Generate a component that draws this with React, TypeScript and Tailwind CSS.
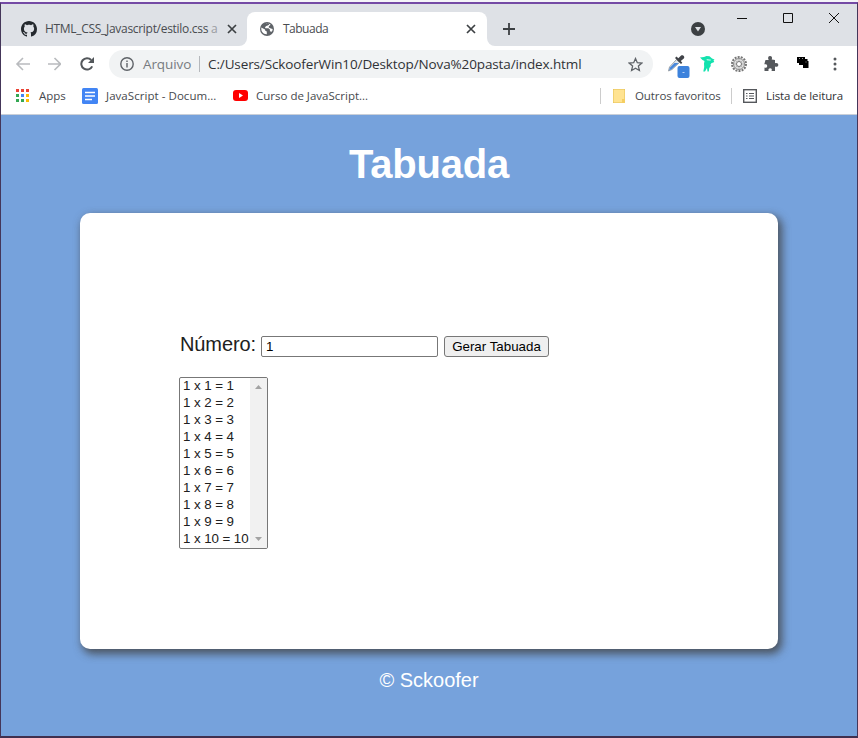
import React from "react";

const ui = "font-['Open_Sans','Noto_Sans',sans-serif] whitespace-nowrap";

function Close({ className = "" }: { className?: string }) {
  return (
    <svg className={`h-[10px] w-[10px] shrink-0 ${className}`} viewBox="0 0 10 10" stroke="#3c4043" strokeWidth="1.7">
      <path d="M1 1l8 8M9 1l-8 8" />
    </svg>
  );
}

function Github() {
  return (
    <svg className="h-4 w-4 shrink-0" viewBox="0 0 16 16" fill="#24292e">
      <path d="M8 0C3.58 0 0 3.58 0 8c0 3.54 2.29 6.53 5.47 7.59.4.07.55-.17.55-.38 0-.19-.01-.82-.01-1.49-2.01.37-2.53-.49-2.69-.94-.09-.23-.48-.94-.82-1.13-.28-.15-.68-.52-.01-.53.63-.01 1.08.58 1.23.82.72 1.21 1.87.87 2.33.66.07-.52.28-.87.51-1.07-1.78-.2-3.64-.89-3.64-3.95 0-.87.31-1.59.82-2.15-.08-.2-.36-1.02.08-2.12 0 0 .67-.21 2.2.82.64-.18 1.32-.27 2-.27s1.36.09 2 .27c1.53-1.04 2.2-.82 2.2-.82.44 1.1.16 1.92.08 2.12.51.56.82 1.27.82 2.15 0 3.07-1.87 3.75-3.65 3.95.29.25.54.73.54 1.48 0 1.07-.01 1.93-.01 2.2 0 .21.15.46.55.38A8.01 8.01 0 0 0 16 8c0-4.42-3.58-8-8-8z" />
    </svg>
  );
}

function Globe() {
  return (
    <svg className="h-[14px] w-[14px] shrink-0" viewBox="0 0 14 14">
      <circle cx="7" cy="7" r="7" fill="#5f6368" />
      <path d="M1.300 5.500 5 7.500l.3 1.300 1.500.7v2.700C3.500 12.500 1.300 9.800 1.300 7zM6 1.400l3 .2v1.200L7.700 3.600l-1.500.3L5 5.200l.5 1h3l1.400 1.400v1.600l1.800.6c.6-.9 1-1.700 1-2.800l-1.900-.6-2-.8V4.200l1.900-1.400C9.300 1.900 7.800 1 6 1.400z" fill="#fff" />
    </svg>
  );
}

function TabStrip() {
  return (
    <div className="flex h-[42px] bg-[#dee1e6]">
      <div className="flex h-[42px] w-[238px] items-center pt-2 pl-5">
        <Github />
        <div className={`ml-2 w-[176px] text-[12px] tracking-[-0.3px] text-[#494c50] ${ui}`}>
          HTML_CSS_Javascript/estilo.css <span className="text-[#9a9da2]">a</span>
        </div>
        <Close className="ml-[6px]" />
      </div>
      <div className="flex w-2 items-end bg-white"><div className="h-full w-full rounded-br-lg bg-[#dee1e6]" /></div>
      <div className="mt-2 flex w-[240px] items-center rounded-t-lg bg-white pl-[13px]">
        <Globe />
        <div className={`ml-[9px] flex-1 text-[12px] tracking-[-0.5px] text-[#494c50] ${ui}`}>Tabuada</div>
        <Close className="mr-[11px]" />
      </div>
      <div className="w-2 bg-white"><div className="h-full w-full rounded-bl-lg bg-[#dee1e6]" /></div>
      <svg className="mt-[19px] ml-[8px] h-3 w-3" viewBox="0 0 12 12" stroke="#3c4043" strokeWidth="1.8"><path d="M6 0v12M0 6h12" /></svg>
      <div className="flex-1" />
      <svg className="mt-[18px] h-[14px] w-[14px]" viewBox="0 0 14 14"><circle cx="7" cy="7" r="7" fill="#3c4043" /><path d="M4 5h6l-3 4.4z" fill="#dee1e6" /></svg>
      <svg className="mt-[9px] mr-[18px] ml-[32px] h-[11px] w-[102px]" viewBox="0 0 102 11" fill="none" stroke="#111"><path d="M0 5.500h10M46.500 .5h9v9h-9zM92 0l10 10M102 0L92 10" /></svg>
    </div>
  );
}

function Toolbar() {
  return (
    <div className="flex h-9 items-center bg-white pl-[14px]">
      <svg className="h-[14px] w-[46px] shrink-0" viewBox="0 0 46 14" fill="none" stroke="#b9bbbe" strokeWidth="1.6"><path d="M15 7H2.500M8 1 2 7l6 6M33 7h12.500M39.500 1l6 6-6 6" /></svg>
      <svg className="ml-[19px] h-[14px] w-[14px] shrink-0" viewBox="0 0 14 14"><path d="M12.200 9.300A5.700 5.700 0 1 1 11.200 3" fill="none" stroke="#53575b" strokeWidth="2" /><path d="M14 0v6H8z" fill="#53575b" /></svg>
      <div className="ml-[15px] flex h-7 w-[544px] shrink-0 items-center rounded-full bg-[#f1f3f4] pl-[11px]">
        <svg className="h-[14px] w-[14px] shrink-0" viewBox="0 0 14 14" fill="none" stroke="#5f6368" strokeWidth="1.4"><circle cx="7" cy="7" r="6.200" /><path d="M7 6v4.500M7 3.500v1.500" /></svg>
        <div className={`ml-[9px] w-[49px] text-[13.500px] tracking-[-0.1px] text-[#777b80] ${ui}`}>Arquivo</div>
        <div className="ml-[7px] mr-[8px] h-4 w-px bg-[#b5b8bc]" />
        <div className={`flex-1 text-[13.500px] tracking-[-0.12px] text-[#303236] ${ui}`}>C:/Users/SckooferWin10/Desktop/Nova%20pasta/index.html</div>
        <svg className="mr-[10px] h-[15px] w-[15px] shrink-0" viewBox="0 0 15 15" fill="none" stroke="#5f6368" strokeWidth="1.300"><path d="m7.500 1.500 1.800 4.200 4.500.4-3.400 3 1 4.400-3.900-2.300-3.900 2.300 1-4.400-3.400-3 4.500-.4z" /></svg>
      </div>
      <svg className="ml-[14px] h-[28px] w-[24px] shrink-0" viewBox="0 0 24 28">
        <path d="m1.500 21 1-4 7-7.500 3 3-7.500 7z" fill="#dfe5eb" stroke="#8b9096" strokeWidth=".8" />
        <path d="m2 20.500 1-3 4.500-4.500h4l-6.500 6z" fill="#4687dc" />
        <path d="m8 8 6 6 1.300-1.300-1.500-1.700 3-2.500c1.500-1.800-.8-4.200-2.700-3l-2.800 2.700-1.800-1.700z" fill="#414449" />
        <rect x="10.500" y="16" width="12" height="12" rx="2" fill="#3c82dc" /><path d="M15.500 22.500h2" stroke="#d8e7ff" strokeWidth=".8" />
      </svg>
      <svg className="ml-[9px] h-4 w-4 shrink-0" viewBox="0 0 16 16" fill="#12e2ae"><path fillRule="evenodd" d="M0 1.500 4 1l2.500-1 3 .3L12 2.500l2.500 1-1 1 .8 1.500-3 1.200-.8 1.300.3 1.500-1.500 2-.5 3.500H7.500L7 12 5 15.500H3.300l.9-4.500-.2-3.500L4.500 5 2.500 4z M6.500 3.200l.5 1 3.500.3.5-.8z" /></svg>
      <svg className="ml-[15px] h-4 w-4 shrink-0" viewBox="0 0 16 16" fill="none">
        <circle cx="8" cy="8" r="7" stroke="#777" strokeWidth="2" strokeDasharray="2 1.140" />
        <circle cx="8" cy="8" r="5.500" fill="#dedede" stroke="#8a8a8a" />
        <path d="M8 3v10M3 8h10M4.500 4.500l7 7M11.500 4.500l-7 7" stroke="#aaa" strokeWidth=".7" />
        <circle cx="8" cy="8" r="2.500" fill="#fff" stroke="#777" />
      </svg>
      <svg className="ml-[16px] h-4 w-4 shrink-0" viewBox="0 0 16 16" fill="#55585c"><path d="M2.500 4h3.200C4.500 1.800 5.200 0 7 0s2.600 1.700 1.700 3.500L12 4v3.300c2-.6 3.300.2 3.300 1.700s-1.500 2.300-3.300 1.500V15H8.500c.7-1.700.2-2.800-1.300-2.800S5 13.400 5.600 15H1.500v-3.500c1.600.5 2.700-.1 2.700-1.600S3 7.800 1.300 8.300z" /></svg>
      <svg className="ml-[18px] mb-[3px] h-3 w-3 shrink-0" viewBox="0 0 12 12"><path d="M0 0h8v2h2.500v2h1v7H6V8H2V6H0z" fill="#000" /><path d="M2 1.500h1M5 1.500h1M9 4.500v1" stroke="#bbb" strokeWidth=".8" /></svg>
      <svg className="ml-[24px] h-[14px] w-1 shrink-0" viewBox="0 0 4 14" fill="#55585c"><circle cx="2" cy="2" r="1.500" /><circle cx="2" cy="7" r="1.500" /><circle cx="2" cy="12" r="1.500" /></svg>
    </div>
  );
}

const appColors = ["#ea4335", "#ea4335", "#ea4335", "#34a853", "#4285f4", "#fbbc04", "#34a853", "#34a853", "#fbbc04"];

function Bookmarks() {
  return (
    <div className={`flex h-[33px] items-center border-b border-[#c9cfd8] bg-white pb-[5px] pl-[15px] text-[11.500px] text-[#46494d] ${ui}`}>
      <div className="grid grid-cols-3 gap-[2px]">{appColors.map((c, i) => <i key={i} className="h-[3px] w-[3px]" style={{ background: c }} />)}</div>
      <div className="ml-[10px] w-[43px]">Apps</div>
      <svg className="h-4 w-4 shrink-0" viewBox="0 0 16 16"><rect width="16" height="16" rx="1.500" fill="#4285f4" /><path d="M3 4.500h10M3 8h10M3 11.500h7" stroke="#fff" strokeWidth="1.600" /></svg>
      <div className="ml-2 w-[127px] tracking-[0.05px]">JavaScript - Docum...</div>
      <svg className="h-[11px] w-[15px] shrink-0" viewBox="0 0 15 11"><rect width="15" height="11" rx="3" fill="#f00" /><path d="m6 3 4 2.500L6 8z" fill="#fff" /></svg>
      <div className="ml-2 flex-1 tracking-[0px]">Curso de JavaScript...</div>
      <div className="h-4 w-px bg-[#ccc]" />
      <svg className="ml-[12px] h-[14px] w-[12px] shrink-0" viewBox="0 0 12 14"><path d="M0 0h12v14H0z" fill="#ffe391" stroke="#e4bf51" /><path d="M9 10h3v4H9z" fill="#f5ce61" /></svg>
      <div className="ml-[10px] w-[86px] tracking-[-0.1px]">Outros favoritos</div>
      <div className="ml-[10px] h-4 w-px bg-[#ccc]" />
      <svg className="ml-[11px] h-[14px] w-[14px] shrink-0" viewBox="0 0 14 14" fill="none" stroke="#55585c"><rect x=".7" y=".7" width="12.600" height="12.600" strokeWidth="1.400" /><path d="M3 4.500h1.500M6 4.500h5M3 7h1.500M6 7h5M3 9.500h1.500M6 9.500h5" /></svg>
      <div className="ml-[9px] w-[91px] tracking-[-0.12px] text-[#303236]">Lista de leitura</div>
    </div>
  );
}

export default function App() {
  return (
    <div className="flex h-[738px] w-[858px] flex-col overflow-hidden bg-[#f4f4f8] pt-[2px]">
      <div className="flex flex-1 flex-col border-x border-t-2 border-b-2 border-x-[#443659] border-t-[#744aa5] border-b-[#40304f]">
        <TabStrip />
        <Toolbar />
        <Bookmarks />
        <main className="flex-1 bg-[#76a2dc] font-['Liberation_Sans',Arial,sans-serif]">
          <h1 className="h-[98px] pt-[25px] text-center text-[40px] leading-[48px] font-bold tracking-[-0.2px] text-white">Tabuada</h1>
          <section className="mx-[79px] h-[436px] rounded-[10px] bg-white pt-[120px] pl-[99px] shadow-[3px_4px_8px_1px_rgba(65,65,65,0.8)]">
            <div className="flex">
              <label className="w-[82px] pl-px text-[20px] leading-[23px] tracking-[-0.1px] text-[#202020]">Número:</label>
              <input readOnly value="1" className="mt-[3px] h-[21px] w-[177px] rounded-[2px] border border-[#777] px-1 text-[13.333px] text-black" />
              <button className="mt-[3px] ml-[6px] h-[21px] w-[105px] rounded-[3px] border border-[#777] bg-[#efefef] text-[13.333px] leading-[18px] whitespace-nowrap text-black">Gerar Tabuada</button>
            </div>
            <div className="mt-5 flex h-[172px] w-[89px] justify-between overflow-hidden rounded-[2px] border border-[#777]">
              <div className="-mt-px pl-[3px] text-[13.333px] leading-[17px] tracking-[-0.08px] whitespace-nowrap text-[#202020]">
                {Array.from({ length: 10 }, (_, i) => <div key={i}>1 x {i + 1} = {i + 1}</div>)}
              </div>
              <div className="flex w-[17px] shrink-0 flex-col items-center justify-between bg-[#f1f1f1] pt-[7px] pb-[7px]">
                <svg className="h-[4px] w-[7px]" viewBox="0 0 7 4" fill="#a3a3a3"><path d="m0 4 3.500-4L7 4z" /></svg>
                <svg className="h-[4px] w-[7px]" viewBox="0 0 7 4" fill="#a3a3a3"><path d="m0 0 3.500 4L7 0z" /></svg>
              </div>
            </div>
          </section>
          <footer className="mt-[20px] text-center text-[20px] leading-[23px] text-white">© Sckoofer</footer>
        </main>
      </div>
    </div>
  );
}
